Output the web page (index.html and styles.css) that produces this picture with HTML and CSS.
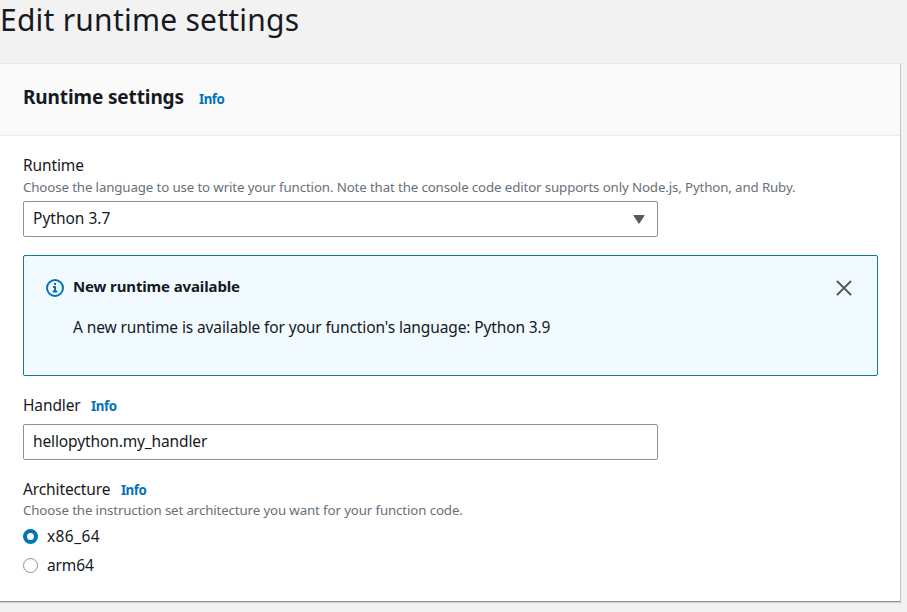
FILE: index.html
```html
<!DOCTYPE html>
<html lang="en">
<head>
<meta charset="utf-8">
<title>Edit runtime settings</title>
<link rel="stylesheet" href="styles.css">
</head>
<body>
<h1 class="page-title">Edit runtime settings</h1>
<main class="panel">
  <header class="panel-header"><h2>Runtime settings</h2><a class="info">Info</a></header>
  <div class="panel-body">
    <section class="field runtime">
      <label class="label">Runtime</label>
      <p class="hint">Choose the language to use to write your function. Note that the console code editor supports only Node.js, Python, and Ruby.</p>
      <div class="control"><span class="selected">Python 3.7</span>
        <svg class="caret" width="12" height="9" viewBox="0 0 12 9"><path d="M.8.5h10.4L6 8.3z" fill="#545b64" stroke="#545b64" stroke-linejoin="round"/></svg>
      </div>
    </section>
    <section class="alert">
      <svg class="alert-icon" width="18" height="18" viewBox="0 0 18 18" fill="none" stroke="#0073bb" stroke-width="2"><circle cx="9" cy="9" r="8"/><path d="M8 5h2M7 8h2v5M6.7 12.5h4.6"/></svg>
      <div class="alert-text">
        <h3>New runtime available</h3>
        <p>A new runtime is available for your function's language: Python 3.9</p>
      </div>
      <svg class="close" width="16" height="16" viewBox="0 0 16 16" fill="none" stroke="#545b64" stroke-width="2" stroke-linecap="round"><path d="M1.5 1.5l13 13M14.5 1.5l-13 13"/></svg>
    </section>
    <section class="field handler">
      <label class="label"><span>Handler</span><a class="info">Info</a></label>
      <div class="control"><span>hellopython.my_handler</span></div>
    </section>
    <section class="field arch">
      <label class="label"><span>Architecture</span><a class="info">Info</a></label>
      <p class="hint">Choose the instruction set architecture you want for your function code.</p>
      <div class="option"><i class="radio checked"></i><span class="x86">x86_64</span></div>
      <div class="option"><i class="radio"></i><span>arm64</span></div>
    </section>
  </div>
</main>
</body>
</html>
```
FILE: styles.css
```css
* { box-sizing: border-box; }
body { margin: 0; height: 612px; overflow: hidden; background: #f2f2f2; color: #16191f; font: 15.5px/22px "Noto Sans", sans-serif; letter-spacing: -0.12px; }
h1, h2, h3, p { margin: 0; font-weight: 400; white-space: nowrap; }
span, a { white-space: nowrap; }
.page-title { height: 63px; font-size: 30px; line-height: 40px; letter-spacing: 0.24px; }
.panel { width: 901px; height: 539px; background: #fff; border-top: 1px solid #e6e7e7; border-right: 1px solid #c6c8c8; border-bottom: 1px solid #8c8f8f; box-shadow: 0 1px 1px rgba(0, 0, 0, 0.12); }
.panel-header { height: 72px; padding: 0 23px 5px; display: flex; align-items: center; gap: 15px; background: #fafafa; border-bottom: 1px solid #eaeded; }
.panel-header h2 { font-size: 19px; font-weight: 700; }
.info { color: #0073bb; font-size: 13.3px; font-weight: 700; letter-spacing: -0.45px; }
.panel-header .info { padding-top: 3px; }
.panel-body { padding: 18px 22px 0 23px; }
.label { display: flex; gap: 10.5px; height: 22px; }
.label .info { padding-top: 1px; }
.hint { font-size: 13.3px; line-height: 20px; height: 20px; color: #687078; letter-spacing: -0.13px; }
.control { width: 635px; height: 36px; padding: 0 12px 0 9px; border: 1px solid #879596; border-radius: 2px; display: flex; align-items: center; justify-content: space-between; background: #fff; }
.control span { padding-bottom: 2px; }
.selected { letter-spacing: 0; }
.runtime { height: 101px; }
.runtime .label { height: 23px; }
.runtime .control { margin-top: 4px; }
.alert { height: 121px; border: 1px solid #147999; border-radius: 2px; background: #f1faff; padding: 19px 25px 0 22px; display: flex; }
.alert-text { margin-left: 9px; flex: 1; }
.alert h3 { font-size: 15px; font-weight: 700; margin-bottom: 19px; letter-spacing: -0.13px; }
.alert-icon { margin-top: 4px; }
.close { margin-top: 5px; }
.handler { margin-top: 18px; }
.handler .control { margin-top: 8px; }
.arch { margin-top: 18px; }
.arch .hint { margin-bottom: 2px; }
.option { height: 29px; padding-bottom: 1px; display: flex; align-items: center; gap: 9px; }
.radio { width: 15px; height: 15px; margin-top: 1px; border: 1px solid #879596; border-radius: 50%; background: #fff; }
.radio.checked { border: 4.5px solid #0073bb; }
.x86 { letter-spacing: 0.4px; }
```
